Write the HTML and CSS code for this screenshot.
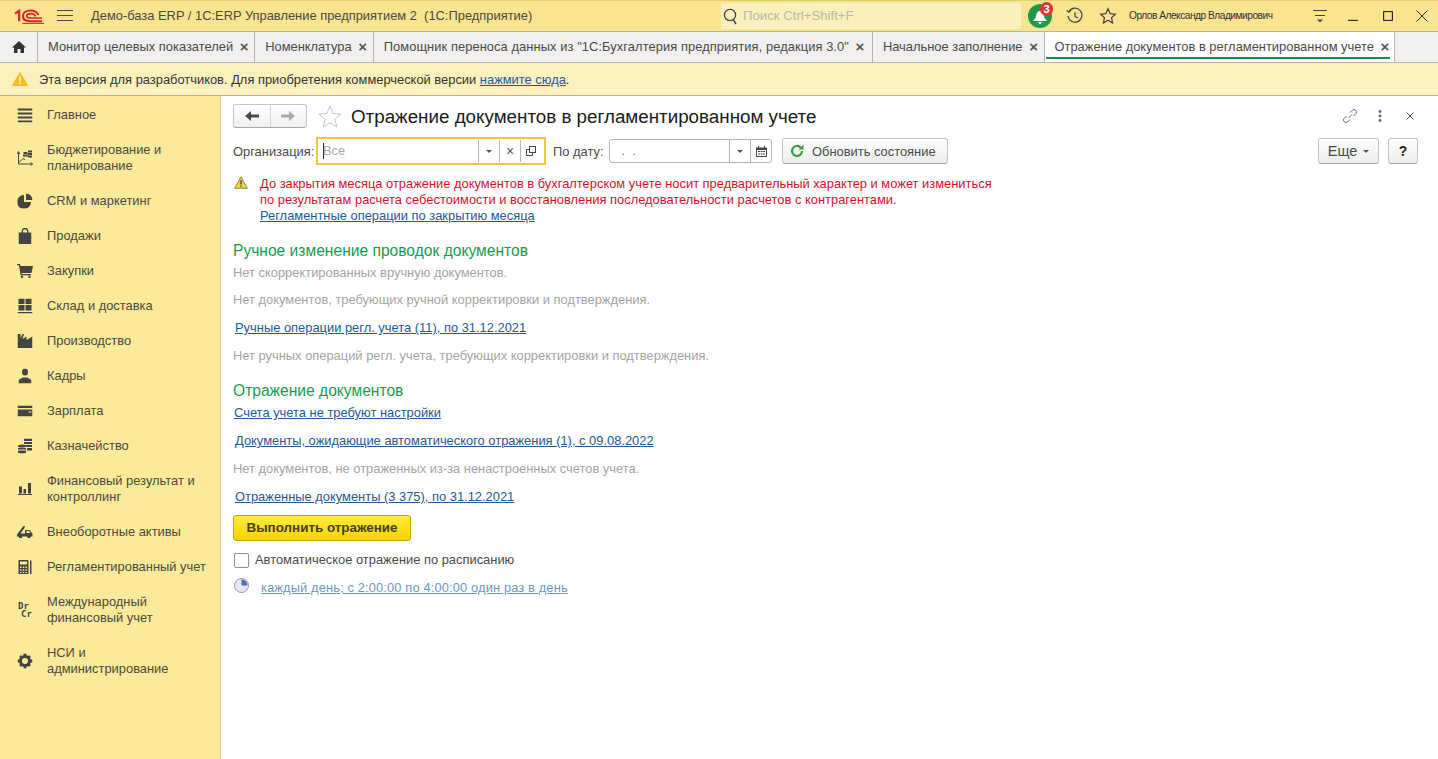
FILE: index.html
```html
<!DOCTYPE html>
<html lang="ru">
<head>
<meta charset="utf-8">
<title>Отражение документов</title>
<link rel="stylesheet" href="styles.css">
</head>
<body>
<header class="top">
  <svg class="logo" width="30" height="15" viewBox="0 0 32 16" fill="none" stroke="#d8272d"><path d="M1 5 L5.500 2 V13" stroke-width="2.400"/><path d="M26 6.500 C24.500 3 21 1.600 17.500 1.600 C12.500 1.600 9.500 4 9.500 7.500 C9.500 11 12.500 13 17 13 H30" stroke-width="2.200"/><path d="M23 8 C22 5.600 20 5 18 5 C15 5 13.500 6 13.500 7.500 C13.500 9 15 9.600 18 9.600 H30" stroke-width="1.800"/><path d="M9 15.300 H32" stroke-width="1.200"/></svg>
  <svg class="burger" width="16" height="12" viewBox="0 0 16 12" stroke="#4a4a40" stroke-width="1"><path d="M0 .5H16M0 5.500H16M0 10.500H16"/></svg>
  <div class="app-title">Демо-база ERP / 1С:ERP Управление предприятием 2&nbsp; (1С:Предприятие)</div>
  <div class="search">
    <svg width="16" height="17" viewBox="0 0 16 17" fill="none" stroke="#444"><circle cx="7" cy="7" r="5.600" stroke-width="1.300"/><path d="M10.500 12 L13 16" stroke-width="1.500"/></svg>
    <span>Поиск Ctrl+Shift+F</span>
  </div>
  <div class="bell">
    <svg width="24" height="24" viewBox="0 0 24 24"><ellipse cx="12" cy="12" rx="12" ry="12" fill="#1d9a4c"/><path d="M12 7 C9.500 7 8.500 9 8 12 C7.700 14 6.500 15.500 5 17 H19 C17.500 15.500 16.300 14 16 12 C15.500 9 14.500 7 12 7Z M10 18 H14 L12 20.500Z" fill="#fff"/></svg>
    <span class="badge">3</span>
  </div>
  <svg class="hist" width="18" height="18" viewBox="0 0 18 18" fill="none" stroke="#444" stroke-width="1.200"><path d="M3 4.500 A7 7 0 1 1 2 9"/><path d="M.8 3.500 L3 5.200 L5 3"/><path d="M9 5 V9.500 L12 11"/></svg>
  <svg class="fav" width="18" height="18" viewBox="0 0 18 18" fill="none" stroke="#444" stroke-width="1.200"><path d="M9 1.800 L11.200 6.600 L16.400 7.200 L12.500 10.700 L13.600 16 L9 13.300 L4.400 16 L5.500 10.700 L1.600 7.200 L6.800 6.600Z"/></svg>
  <div class="user">Орлов Александр Владимирович</div>
  <svg class="more" width="16" height="14" viewBox="0 0 16 14" stroke="#444"><path d="M1 1.500H15M3 6.500H13" fill="none"/><path d="M5 10.500H11L8 13.500Z" fill="#444" stroke="none"/></svg>
  <svg class="win min" width="10" height="10" viewBox="0 0 10 10" stroke="#333" stroke-width="1.400"><path d="M0 9.500H10"/></svg>
  <svg class="win max" width="10" height="10" viewBox="0 0 10 10" fill="none" stroke="#333" stroke-width="1.200"><rect x=".6" y=".6" width="8.800" height="8.800"/></svg>
  <svg class="win cls" width="12" height="12" viewBox="0 0 12 12" stroke="#333"><path d="M.5 .5L11.500 11.500M11.500 .5L.5 11.500"/></svg>
</header>

<nav class="tabs">
  <div class="home"><svg width="14" height="12" viewBox="0 0 14 12" fill="#333"><path d="M7 0 L14 6.500 H12 V12 H8.500 V8 H5.500 V12 H2 V6.500 H0Z"/></svg></div>
  <div class="tab">Монитор целевых показателей<span class="x">×</span></div>
  <div class="tab">Номенклатура<span class="x">×</span></div>
  <div class="tab tab-long">Помощник переноса данных из "1С:Бухгалтерия предприятия, редакция 3.0"<span class="x">×</span></div>
  <div class="tab">Начальное заполнение<span class="x">×</span></div>
  <div class="tab active">Отражение документов в регламентированном учете<span class="x">×</span></div>
</nav>

<div class="notice">
  <svg width="16" height="14" viewBox="0 0 16 14"><path d="M8 .5 L15.500 13.500 H.5Z" fill="#f3bd1f" stroke="#f3bd1f" stroke-linejoin="round"/><path d="M7.300 4.500H8.700V9.500H7.300ZM7.300 10.500H8.700V12H7.300Z" fill="#fff"/></svg>
  <span>Эта версия для разработчиков. Для приобретения коммерческой версии <a href="#">нажмите сюда</a>.</span>
</div>

<div class="main">
  <aside class="side">
    <div class="item"><svg width="15" height="15" viewBox="0 0 15 15" fill="#444"><path d="M0 1h15v2H0zM0 5h15v2H0zM0 9h15v2H0zM0 13h15v2H0z"/></svg><span>Главное</span></div>
    <div class="item"><svg width="16" height="17" viewBox="0 0 16 17" fill="none" stroke="#444"><path d="M1.500 3 V14.500 H15.500 M0 4.500 L1.500 2 L3 4.500 M13.500 13 L15.500 14.500 L13.500 16"/><path d="M2 13 L6 9 L8 10" /><path d="M6.500 3.500h4M6 6h5M11 2h4M11 4.500h4M11 7h4" stroke-width="1.800"/></svg><span>Бюджетирование и<br>планирование</span></div>
    <div class="item"><svg width="15" height="15" viewBox="0 0 15 15" fill="#444"><path d="M6.500 1.500 V8.500 H13.500 A7 7 0 1 1 6.500 1.500Z"/><path d="M8.500 0 A6.500 6.500 0 0 1 15 6.500 H8.500Z"/></svg><span>CRM и маркетинг</span></div>
    <div class="item"><svg width="13" height="16" viewBox="0 0 13 16"><path d="M0 4.500H13V16H0Z" fill="#444"/><path d="M3.800 6 V3 A2.700 2.500 0 0 1 9.200 3 V6" fill="none" stroke="#444" stroke-width="1.300"/></svg><span>Продажи</span></div>
    <div class="item"><svg width="16" height="14" viewBox="0 0 16 14" fill="#444"><path d="M0 0H3L3.500 2H16L14.500 9H4.500L4.800 10H14V11.200H3.500L2 1.200H0Z"/><circle cx="5" cy="12.800" r="1.200"/><circle cx="12.500" cy="12.800" r="1.200"/></svg><span>Закупки</span></div>
    <div class="item"><svg width="15" height="15" viewBox="0 0 15 15" fill="#444"><path d="M1 0H7V5.500H1ZM8 0H14V5.500H8ZM1 6.500H7V12H1ZM8 6.500H14V12H8ZM0 13.500H15V15H0Z"/></svg><span>Склад и доставка</span></div>
    <div class="item"><svg width="15" height="14" viewBox="0 0 15 14" fill="#444"><path d="M0 14V0H3V4L5 0H6.500L5 5L9 2.500V6L15 2.500V14Z"/></svg><span>Производство</span></div>
    <div class="item"><svg width="13" height="15" viewBox="0 0 13 15" fill="#444"><path d="M3.500 3.500 A3 3.500 0 0 1 9.500 3.500 A3 3.500 0 0 1 3.500 3.500Z"/><path d="M0 15 V12.500 C0 10.500 3 10 4.500 9 H8.500 C10 10 13 10.500 13 12.500 V15Z"/></svg><span>Кадры</span></div>
    <div class="item"><svg width="15" height="11" viewBox="0 0 15 11" fill="#444"><path d="M0 0H15V2.500H0ZM0 4H15V11H0Z"/><rect x="11" y="6" width="3" height="1" fill="#faea99"/></svg><span>Зарплата</span></div>
    <div class="item"><svg width="14" height="15" viewBox="0 0 14 15" fill="#444"><path d="M6 0h8v2.500H6zM6 3.500h8v2H6zM8 6.500h6v2H8zM9 9.500h5V12H9z"/><ellipse cx="4" cy="7.500" rx="4" ry="1.500"/><path d="M0 9.500h8v1.500H0zM0 12h8v1.500H0z"/><ellipse cx="4" cy="14" rx="4" ry="1"/></svg><span>Казначейство</span></div>
    <div class="item"><svg width="14" height="12" viewBox="0 0 14 12" fill="#444"><path d="M1 3.500H4V10.500H1ZM5.500 6H8V10.500H5.500ZM10 0H13V10.500H10ZM0 11H14V12H0Z"/></svg><span>Финансовый результат и<br>контроллинг</span></div>
    <div class="item"><svg width="16" height="13" viewBox="0 0 16 13" fill="#444"><path d="M0 9 L6 1 L8 0 L7.500 2.500 L3.500 8 H8V4.500H12.500L15.500 8V11H0Z"/><path d="M9.500 5.500H12L13.500 7.500H9.500Z" fill="#faea99"/><circle cx="3.500" cy="11" r="1.800"/><circle cx="12" cy="11" r="1.800"/></svg><span>Внеоборотные активы</span></div>
    <div class="item"><svg width="14" height="15" viewBox="0 0 14 15"><path d="M.5 4V1.500Q.5 .5 1.500 .5H9.500Q10.500 .5 10.500 1.500V14.500H.5Z" fill="#444"/><path d="M2 2H9V5H2ZM2 7H3.500V8.500H2ZM4.700 7H6.200V8.500H4.700ZM7.400 7H8.900V8.500H7.400ZM2 9.700H3.500V11.200H2ZM4.700 9.700H6.200V11.200H4.700ZM7.400 9.700H8.900V11.200H7.400ZM2 12.400H3.500V13.600H2ZM4.700 12.400H6.200V13.600H4.700ZM7.400 12.400H8.900V13.600H7.400Z" fill="#faea99"/><path d="M12 1H13.500V14.500H12Z" fill="#444"/></svg><span>Регламентированный учет</span></div>
    <div class="item"><div class="drcr"><b>Dr</b><b class="cr">Cr</b></div><span>Международный<br>финансовый учет</span></div>
    <div class="item"><svg width="15" height="15" viewBox="0 0 15 15"><circle cx="7.500" cy="7.500" r="4.500" fill="none" stroke="#444" stroke-width="3"/><path d="M6 0H9V3H6ZM6 12H9V15H6ZM0 6H3V9H0ZM12 6H15V9H12ZM1.500 3.500L3.500 1.500L5 3.500L3.500 5ZM13.500 3.500L11.500 1.500L10 3.500L11.500 5ZM1.500 11.500L3.500 13.500L5 11.500L3.500 10ZM13.500 11.500L11.500 13.500L10 11.500L11.500 10Z" fill="#444"/></svg><span>НСИ и<br>администрирование</span></div>
  </aside>

  <main class="content">
    <div class="titlebar">
      <div class="navbtns">
        <div class="nav-b"><svg width="14" height="10" viewBox="0 0 14 10" fill="#4a4a4a"><path d="M0 5L6 0V3.500H14V6.500H6V10Z"/></svg></div>
        <div class="nav-b off"><svg width="14" height="10" viewBox="0 0 14 10" fill="#a8a8a8"><path d="M14 5L8 0V3.500H0V6.500H8V10Z"/></svg></div>
      </div>
      <svg class="star" width="24" height="23" viewBox="0 0 24 23" fill="none" stroke="#c4c4c4"><path d="M12 1 L15 8.500 L23 9.100 L16.900 14.200 L18.800 22 L12 17.800 L5.200 22 L7.100 14.200 L1 9.100 L9 8.500Z"/></svg>
      <h1>Отражение документов в регламентированном учете</h1>
      <svg class="link-i" width="16" height="16" viewBox="0 0 16 16" fill="none" stroke="#666"><path d="M6.500 10 L10 6.500"/><path d="M8 4.500 L10.500 2 A2.500 2.500 0 0 1 14 5.500 L11.500 8"/><path d="M4.500 8 L2 10.500 A2.500 2.500 0 0 0 5.500 14 L8 11.500"/></svg>
      <svg class="dots" width="4" height="12" viewBox="0 0 4 12" fill="#666"><circle cx="2" cy="1.500" r="1.400"/><circle cx="2" cy="6" r="1.400"/><circle cx="2" cy="10.500" r="1.400"/></svg>
      <svg class="close" width="8" height="8" viewBox="0 0 8 8" stroke="#555"><path d="M.5 .5L7.500 7.500M7.500 .5L.5 7.500"/></svg>
    </div>

    <div class="filters">
      <label class="lbl org-l">Организация:</label>
      <div class="org">
        <div class="inp"><i class="caret"></i>Все</div>
        <div class="cell"><i class="tri"></i></div>
        <div class="cell x2">×</div>
        <div class="cell"><svg width="10" height="10" viewBox="0 0 10 10" fill="none" stroke="#444"><rect x="3.500" y=".5" width="6" height="6"/><path d="M3 3.500H.5V9.500H6.500V7"/></svg></div>
      </div>
      <label class="lbl date-l">По дату:</label>
      <div class="date">
        <div class="inp">&nbsp;.&nbsp;&nbsp;.</div>
        <div class="cell"><i class="tri"></i></div>
        <div class="cell"><svg width="11" height="11" viewBox="0 0 11 11" fill="#444"><path d="M0 1.500H2V0H3V1.500H8V0H9V1.500H11V11H0ZM1 4V10H10V4Z"/><path d="M2 5H4V6H2ZM4.500 5H6.500V6H4.500ZM7 5H9V6H7ZM2 7.500H4V8.500H2ZM4.500 7.500H6.500V8.500H4.500ZM7 7.500H9V8.500H7Z"/></svg></div>
      </div>
      <button class="btn refresh"><svg width="14" height="14" viewBox="0 0 14 14" fill="none"><path d="M12 7 A5 5 0 1 1 10.500 3.400" stroke="#3f9a3a" stroke-width="2.200"/><path d="M8.500 5.500H13.500V.5Z" fill="#3f9a3a"/></svg><span>Обновить состояние</span></button>
      <button class="btn more-b">Еще<i class="tri"></i></button>
      <button class="btn help">?</button>
    </div>

    <div class="warn">
      <svg width="14" height="13" viewBox="0 0 14 13"><path d="M7 .8 L13.300 12.300 H.7Z" fill="#f0d24d" stroke="#9c8a3c" stroke-linejoin="round"/><path d="M6.400 4H7.600V8.500H6.400ZM6.400 9.500H7.600V11H6.400Z" fill="#444"/></svg>
      <div>
        <p class="err">До закрытия месяца отражение документов в бухгалтерском учете носит предварительный характер и может измениться</p>
        <p class="err">по результатам расчета себестоимости и восстановления последовательности расчетов с контрагентами.</p>
        <p class="warn-link"><a href="#">Регламентные операции по закрытию месяца</a></p>
      </div>
    </div>

    <h2 class="first">Ручное изменение проводок документов</h2>
    <p class="row near grey">Нет скорректированных вручную документов.</p>
    <p class="row wide grey">Нет документов, требующих ручной корректировки и подтверждения.</p>
    <p class="row wide ind2"><a href="#">Ручные операции регл. учета (11), по 31.12.2021</a></p>
    <p class="row wide grey">Нет ручных операций регл. учета, требующих корректировки и подтверждения.</p>

    <h2 class="second">Отражение документов</h2>
    <p class="row near ind1"><a href="#">Счета учета не требуют настройки</a></p>
    <p class="row wide ind2"><a href="#">Документы, ожидающие автоматического отражения (1), с 09.08.2022</a></p>
    <p class="row wide grey">Нет документов, не отраженных из-за ненастроенных счетов учета.</p>
    <p class="row wide ind2"><a href="#">Отраженные документы (3 375), по 31.12.2021</a></p>

    <button class="run">Выполнить отражение</button>
    <div class="check"><i class="box"></i><span>Автоматическое отражение по расписанию</span></div>
    <div class="sched">
      <svg width="15" height="15" viewBox="0 0 15 15"><circle cx="7.500" cy="7.500" r="7" fill="#e8e8f4" stroke="#8d8fc0"/><path d="M7.500 1.500 A6 6 0 0 1 13.500 7.500 H7.500Z" fill="#5a6aa8"/></svg>
      <a href="#">каждый день; с 2:00:00 по 4:00:00 один раз в день</a>
    </div>
  </main>
</div>
</body>
</html>
```

FILE: styles.css
```css
* { box-sizing: border-box; }
html, body { height: 100%; }
body {
  margin: 0;
  height: 759px;
  overflow: hidden;
  display: flex;
  flex-direction: column;
  font-family: "Liberation Sans", Arial, sans-serif;
  font-size: 12.9px;
  line-height: 16px;
  color: #333;
  background: #fff;
}
p, h1, h2 { margin: 0; font-weight: normal; }
a { color: #215a96; text-decoration: underline; }

.top {
  height: 32px;
  flex: none;
  display: flex;
  align-items: center;
  background: #f8e491;
  border-bottom: 1px solid #b8b49a;
  border-top: 1px solid #e3ce78;
}
.logo { margin-left: 14px; }
.burger { margin-left: 13px; }
.app-title { margin-left: 18px; width: 630px; color: #4a4a3e; white-space: nowrap; }
.search {
  width: 300px;
  height: 26px;
  display: flex;
  align-items: center;
  gap: 4px;
  padding-left: 2px;
  background: #fbf0bb;
  border-radius: 2px;
  color: #b9b9a4;
  font-size: 13.2px;
}
.bell { position: relative; margin-left: 7px; width: 24px; height: 24px; }
.bell svg { display: block; }
.badge {
  position: absolute;
  left: 12px;
  top: -2px;
  width: 13px;
  height: 14px;
  border-radius: 7px;
  background: #e1343a;
  color: #fff;
  font-size: 11px;
  line-height: 14px;
  font-weight: bold;
  text-align: center;
}
.hist { margin-left: 14px; }
.fav { margin-left: 15px; }
.user { margin-left: 12px; width: 142px; font-size: 10.2px; letter-spacing: -0.5px; color: #333; white-space: nowrap; }
.more { margin-left: 41px; }
.win { flex: none; }
.min { margin-left: 20px; }
.max { margin-left: 25px; }
.cls { margin-left: 23px; }

.tabs {
  height: 31px;
  flex: none;
  display: flex;
  background: #f0f0f0;
  border-bottom: 1px solid #b5b5ad;
}
.home {
  width: 38px;
  display: flex;
  align-items: center;
  justify-content: center;
  border-right: 1px solid #b5b5ad;
}
.tab {
  display: flex;
  align-items: center;
  padding: 0 4px 0 10px;
  border-right: 1px solid #b5b5ad;
  color: #4a4a4a;
  white-space: nowrap;
}
.tab-long { letter-spacing: 0.07px; padding-right: 6px; }
.x { margin-left: 5px; width: 12px; text-align: center; font-weight: bold; font-size: 15px; color: #555; }
.tab.active { position: relative; background: #fff; padding-right: 3px; }
.tab.active::after {
  content: "";
  position: absolute;
  left: 1px;
  right: 4px;
  bottom: 3px;
  height: 2px;
  background: #1d8a5c;
}

.notice {
  height: 33px;
  flex: none;
  display: flex;
  align-items: center;
  gap: 11px;
  padding-left: 12px;
  background: #fdf0bf;
  border-bottom: 1px solid #b8b49a;
  color: #333;
}
.notice svg { flex: none; }
.notice span { padding-top: 2px; }

.main { flex: 1; display: flex; min-height: 0; }
.side {
  width: 221px;
  flex: none;
  padding-top: 1px;
  background: #faea99;
  border-right: 1px solid #d9cd94;
  color: #4a4a3e;
}
.item {
  display: flex;
  align-items: center;
  padding: 9.5px 0 9.5px 47px;
  position: relative;
}
.item > svg, .drcr {
  position: absolute;
  left: 25px;
  top: 50%;
  transform: translate(-50%, -50%);
}
.drcr {
  display: flex;
  flex-direction: column;
  font-family: "DejaVu Sans Mono", "Liberation Mono", monospace;
  font-size: 9px;
  line-height: 8px;
  color: #444;
}
.drcr .cr { margin-left: 3px; }

.content { flex: 1; min-width: 0; padding: 8px 20px 0 12px; }
.titlebar { height: 24px; display: flex; align-items: center; }
.navbtns {
  width: 74px;
  height: 24px;
  display: flex;
  border: 1px solid #c4c4c4;
  border-bottom-color: #a8a8a8;
  border-radius: 3px;
  background: linear-gradient(#fff, #efefef);
}
.nav-b { flex: 1; display: flex; align-items: center; justify-content: center; }
.nav-b.off { border-left: 1px solid #d4d4d4; }
.star { margin-left: 11px; }
h1 { margin-left: 9px; padding-top: 2px; font-size: 18.8px; line-height: 24px; color: #1a1a1a; white-space: nowrap; }
.link-i { margin-left: auto; }
.dots { margin-left: 20px; }
.close { margin-left: 24px; margin-right: 4px; }

.filters { margin-top: 9px; height: 28px; display: flex; align-items: center; }
.lbl { color: #4a4a4a; white-space: nowrap; padding-top: 2px; }
.org-l { width: 83px; }
.org {
  width: 230px;
  height: 28px;
  display: flex;
  border: 2px solid #e9c93f;
  padding: 1px 3px 1px 0;
  background: #fff;
}
.inp { flex: 1; min-width: 0; display: flex; align-items: center; padding-left: 5px; color: #aaa; }
.caret { width: 1px; height: 16px; background: #222; margin-right: -1px; }
.cell {
  width: 21px;
  display: flex;
  align-items: center;
  justify-content: center;
  border-left: 1px solid #b4b4b4;
  color: #555;
}
.x2 { font-size: 14px; }
.tri {
  display: inline-block;
  width: 0;
  height: 0;
  border: 3px solid transparent;
  border-top: 3px solid #555;
  border-bottom: 0;
  border-left-width: 3.5px;
  border-right-width: 3.5px;
}
.date-l { margin-left: 7px; width: 56px; }
.date {
  width: 163px;
  height: 24px;
  display: flex;
  border: 1px solid #b4b4b4;
  border-radius: 3px;
}
.date .inp { color: #777; padding-left: 8px; }
.btn {
  height: 26px;
  padding: 0;
  display: flex;
  align-items: center;
  justify-content: center;
  font: inherit;
  color: #4a4a4a;
  border: 1px solid #c4c4c4;
  border-bottom-color: #a8a8a8;
  border-radius: 3px;
  background: linear-gradient(#fff, #ececec);
}
.refresh { margin-left: 10px; width: 166px; gap: 8px; justify-content: flex-start; padding-left: 7px; }
.refresh span { padding-top: 2px; }
.more-b { margin-left: auto; width: 61px; gap: 6px; font-size: 14.5px; }
.help { margin-left: 9px; width: 30px; font-size: 14px; font-weight: bold; color: #222; }

.warn { margin-top: 11px; height: 47px; display: flex; line-height: 15.5px; }
.warn svg { flex: none; margin: 0 12px 0 1px; }
.warn-link { margin-top: 1px; }
.err { color: #d0142c; }

h2 { font-size: 15.6px; line-height: 20px; color: #179b51; }
.first { margin-top: 18px; }
.second { margin-top: 17px; }
.row { white-space: nowrap; }
.near { margin-top: 4px; }
.wide { margin-top: 12px; }
.first + .near + .wide { margin-top: 11px; }
.grey { color: #a3a3a3; }
.ind1 { padding-left: 1px; }
.ind2 { padding-left: 2px; }

.run {
  display: block;
  margin-top: 10px;
  width: 178px;
  height: 26px;
  padding: 0;
  font: inherit;
  font-size: 13.4px;
  font-weight: bold;
  color: #444022;
  border: 1px solid #c8a800;
  border-radius: 3px;
  background: linear-gradient(#ffec3d, #f7d200);
}
.check { margin-top: 11px; height: 16px; display: flex; align-items: center; padding-left: 1px; color: #4a4a4a; }
.box { width: 15px; height: 15px; margin-right: 6px; border: 1px solid #909090; border-radius: 2px; background: #fff; }
.sched { margin-top: 12px; height: 16px; display: flex; align-items: center; padding-left: 1px; }
.sched svg { margin-top: -6px; }
.sched a { margin-left: 12px; color: #6f97c2; letter-spacing: 0.12px; }
```
